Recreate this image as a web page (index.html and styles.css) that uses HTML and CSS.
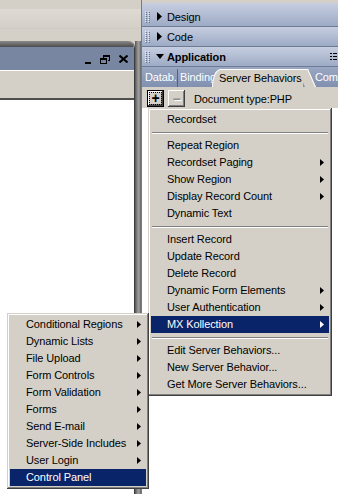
FILE: index.html
```html
<!DOCTYPE html>
<html lang="en">
<head>
    <meta charset="UTF-8">
    <title>Server Behaviors menu</title>
    <link rel="stylesheet" href="styles.css">
</head>
<body>
    <div class="screen">
        <div class="left">
            <div class="left-top"></div>
            <div class="left-main">
                <div class="docwin">
                    <div class="frame-top"></div>
                    <div class="titlebar">
                        <svg class="wbtn" width="6" height="9" viewBox="0 0 6 9"><rect x="0" y="7" width="6" height="2" fill="#000"/></svg>
                        <svg class="wbtn" width="10" height="9" viewBox="0 0 10 9">
                            <path d="M3 0h7v6h-2v-1h1v-3h-5v1h-1z" fill="#000"/>
                            <path d="M0 3h7v6h-7zM1 5v3h5v-3z" fill="#000" fill-rule="evenodd"/>
                        </svg>
                        <svg class="wbtn" width="9" height="8" viewBox="0 0 9 8"><path d="M0.5 0.5l8 7M8.5 0.5l-8 7" stroke="#000" stroke-width="2"/></svg>
                    </div>
                    <div class="doc-toolbar"></div>
                    <div class="doc-page"></div>
                </div>
                <div class="splitter"></div>
            </div>
        </div>

        <div class="panel">
            <div class="bar first">
                <svg class="grip" width="5" height="12" viewBox="0 0 5 12"><path d="M0 0h1v1h-1zM3 0h1v1h-1zM0 2h1v1h-1zM3 2h1v1h-1zM0 4h1v1h-1zM3 4h1v1h-1zM0 6h1v1h-1zM3 6h1v1h-1zM0 8h1v1h-1zM3 8h1v1h-1zM0 10h1v1h-1zM3 10h1v1h-1z" fill="#e9edf5"/><path d="M1 1h1v1h-1zM4 1h1v1h-1zM1 3h1v1h-1zM4 3h1v1h-1zM1 5h1v1h-1zM4 5h1v1h-1zM1 7h1v1h-1zM4 7h1v1h-1zM1 9h1v1h-1zM4 9h1v1h-1zM1 11h1v1h-1zM4 11h1v1h-1z" fill="#6b7893"/></svg>
                <svg class="tri" width="8" height="9" viewBox="0 0 8 9"><path d="M1 0l5 4.5l-5 4.5z" fill="#000"/></svg>
                <span>Design</span>
            </div>
            <div class="bar">
                <svg class="grip" width="5" height="12" viewBox="0 0 5 12"><path d="M0 0h1v1h-1zM3 0h1v1h-1zM0 2h1v1h-1zM3 2h1v1h-1zM0 4h1v1h-1zM3 4h1v1h-1zM0 6h1v1h-1zM3 6h1v1h-1zM0 8h1v1h-1zM3 8h1v1h-1zM0 10h1v1h-1zM3 10h1v1h-1z" fill="#e9edf5"/><path d="M1 1h1v1h-1zM4 1h1v1h-1zM1 3h1v1h-1zM4 3h1v1h-1zM1 5h1v1h-1zM4 5h1v1h-1zM1 7h1v1h-1zM4 7h1v1h-1zM1 9h1v1h-1zM4 9h1v1h-1zM1 11h1v1h-1zM4 11h1v1h-1z" fill="#6b7893"/></svg>
                <svg class="tri" width="8" height="9" viewBox="0 0 8 9"><path d="M1 0l5 4.5l-5 4.5z" fill="#000"/></svg>
                <span>Code</span>
            </div>
            <div class="bar open">
                <svg class="grip" width="5" height="12" viewBox="0 0 5 12"><path d="M0 0h1v1h-1zM3 0h1v1h-1zM0 2h1v1h-1zM3 2h1v1h-1zM0 4h1v1h-1zM3 4h1v1h-1zM0 6h1v1h-1zM3 6h1v1h-1zM0 8h1v1h-1zM3 8h1v1h-1zM0 10h1v1h-1zM3 10h1v1h-1z" fill="#e9edf5"/><path d="M1 1h1v1h-1zM4 1h1v1h-1zM1 3h1v1h-1zM4 3h1v1h-1zM1 5h1v1h-1zM4 5h1v1h-1zM1 7h1v1h-1zM4 7h1v1h-1zM1 9h1v1h-1zM4 9h1v1h-1zM1 11h1v1h-1zM4 11h1v1h-1z" fill="#6b7893"/></svg>
                <svg class="tri" width="8" height="9" viewBox="0 0 8 9"><path d="M0 2h8l-4 5z" fill="#000"/></svg>
                <span class="bar-title">Application</span>
                <svg class="opts" width="7" height="9" viewBox="0 0 7 9"><path d="M0 1h2v1h-2zM0 4h2v1h-2zM0 7h2v1h-2zM3 1h4v1h-4zM3 4h4v1h-4zM3 7h4v1h-4z" fill="#000"/></svg>
            </div>

            <div class="tabs">
                <span class="tab t-data">Datab.</span>
                <span class="tab t-bind">Binding</span>
                <span class="tab active">Server Behaviors</span>
                <span class="tab t-comp">Comp</span>
            </div>

            <div class="sb-toolbar">
                <span class="btn btn-add"><span class="focus">+</span></span>
                <span class="btn btn-del">&minus;</span>
                <span class="doctype">Document type:PHP</span>
            </div>
            <div class="sb-body"></div>
        </div>
    </div>

    <!-- popup menus drawn over the panel -->
    <div class="menu main-menu">
        <div class="item">Recordset</div>
        <div class="sep"></div>
        <div class="item">Repeat Region</div>
        <div class="item">Recordset Paging<svg class="arrow" width="4" height="7" viewBox="0 0 4 7"><path d="M0 0l4 3.5l-4 3.5z"/></svg></div>
        <div class="item">Show Region<svg class="arrow" width="4" height="7" viewBox="0 0 4 7"><path d="M0 0l4 3.5l-4 3.5z"/></svg></div>
        <div class="item">Display Record Count<svg class="arrow" width="4" height="7" viewBox="0 0 4 7"><path d="M0 0l4 3.5l-4 3.5z"/></svg></div>
        <div class="item">Dynamic Text</div>
        <div class="sep"></div>
        <div class="item">Insert Record</div>
        <div class="item">Update Record</div>
        <div class="item">Delete Record</div>
        <div class="item">Dynamic Form Elements<svg class="arrow" width="4" height="7" viewBox="0 0 4 7"><path d="M0 0l4 3.5l-4 3.5z"/></svg></div>
        <div class="item">User Authentication<svg class="arrow" width="4" height="7" viewBox="0 0 4 7"><path d="M0 0l4 3.5l-4 3.5z"/></svg></div>
        <div class="item selected">MX Kollection<svg class="arrow" width="4" height="7" viewBox="0 0 4 7"><path d="M0 0l4 3.5l-4 3.5z"/></svg></div>
        <div class="sep"></div>
        <div class="item">Edit Server Behaviors...</div>
        <div class="item">New Server Behavior...</div>
        <div class="item">Get More Server Behaviors...</div>
    </div>

    <div class="menu sub-menu">
        <div class="item">Conditional Regions<svg class="arrow" width="4" height="7" viewBox="0 0 4 7"><path d="M0 0l4 3.5l-4 3.5z"/></svg></div>
        <div class="item">Dynamic Lists<svg class="arrow" width="4" height="7" viewBox="0 0 4 7"><path d="M0 0l4 3.5l-4 3.5z"/></svg></div>
        <div class="item">File Upload<svg class="arrow" width="4" height="7" viewBox="0 0 4 7"><path d="M0 0l4 3.5l-4 3.5z"/></svg></div>
        <div class="item">Form Controls<svg class="arrow" width="4" height="7" viewBox="0 0 4 7"><path d="M0 0l4 3.5l-4 3.5z"/></svg></div>
        <div class="item">Form Validation<svg class="arrow" width="4" height="7" viewBox="0 0 4 7"><path d="M0 0l4 3.5l-4 3.5z"/></svg></div>
        <div class="item">Forms<svg class="arrow" width="4" height="7" viewBox="0 0 4 7"><path d="M0 0l4 3.5l-4 3.5z"/></svg></div>
        <div class="item">Send E-mail<svg class="arrow" width="4" height="7" viewBox="0 0 4 7"><path d="M0 0l4 3.5l-4 3.5z"/></svg></div>
        <div class="item">Server-Side Includes<svg class="arrow" width="4" height="7" viewBox="0 0 4 7"><path d="M0 0l4 3.5l-4 3.5z"/></svg></div>
        <div class="item">User Login<svg class="arrow" width="4" height="7" viewBox="0 0 4 7"><path d="M0 0l4 3.5l-4 3.5z"/></svg></div>
        <div class="item selected">Control Panel</div>
    </div>
</body>
</html>
```

FILE: styles.css
```css
body {
    margin: 0;
    width: 338px;
    height: 494px;
    overflow: hidden;
    position: relative;
    background-color: #d4d0c8;
    font-family: "Liberation Sans", Arial, sans-serif;
    font-size: 11px;
    letter-spacing: -0.1px;
    color: #000;
}
.screen {
    display: flex;
    height: 494px;
}

/* left: document window */
.left {
    width: 141px;
    display: flex;
    flex-direction: column;
}
.left-top {
    height: 41px;
    background: linear-gradient(#d4d0c8 0, #d4d0c8 9px, #dedad3 9px, #d4d0c8 28px, #ccc8c0 28px, #d4d0c8 29px);
}
.left-main {
    flex: 1;
    display: flex;
}
.docwin {
    flex: 1;
    display: flex;
    flex-direction: column;
    background-color: #fff;
    border-right: 1px solid #3c3c3c;
    border-top-right-radius: 7px;
    overflow: hidden;
}
.frame-top {
    height: 6px;
    background: linear-gradient(#8a8a8a, #4c4c4c);
}
.titlebar {
    height: 24px;
    background-color: #7886a2;
    border-bottom: 1px solid #fff;
    display: flex;
    justify-content: flex-end;
    align-items: center;
    padding: 1px 6px 0 0;
    box-sizing: border-box;
}
.wbtn {
    display: block;
    margin-left: 9px;
}
.doc-toolbar {
    height: 27px;
    background-color: #d4d0c8;
    border-bottom: 2px solid #4e4e4e;
}
.doc-page {
    flex: 1;
    background-color: #fff;
}
.splitter {
    width: 6px;
    background: linear-gradient(to right, #555, #8c8c8c 40%, #a2a2a2 65%, #626262);
}

/* right: panel group */
.panel {
    flex: 1;
    min-width: 0;
    display: flex;
    flex-direction: column;
    padding-top: 3px;
    background-color: #d4d0c8;
    border-left: 1px solid #7a7a7a;
}
.bar {
    height: 19px;
    display: flex;
    align-items: center;
    background: linear-gradient(#c6cee0, #9eabc5);
    border-bottom: 1px solid #6d7b97;
}
.bar.first {
    padding-top: 4px;
}
.grip {
    display: block;
    margin: 0 6px 0 3px;
}
.tri {
    display: block;
    margin-right: 3px;
}
.bar-title {
    font-weight: bold;
    flex: 1;
}
.opts {
    display: block;
    margin-right: 1px;
}

.tabs {
    height: 20px;
    display: flex;
    align-items: flex-end;
    background: linear-gradient(#9aa7c2, #8190b0);
    white-space: nowrap;
    overflow: hidden;
}
.tab {
    flex-shrink: 0;
    color: #fff;
    height: 18px;
    line-height: 17px;
    box-sizing: border-box;
}
.t-data {
    width: 36px;
    padding-left: 3px;
    border-right: 1px solid #55627e;
    overflow: hidden;
}
.t-bind {
    width: 36px;
    padding-left: 2px;
    overflow: hidden;
}
.tab.active {
    position: relative;
    z-index: 1;
    margin-left: -2px;
    width: 91px;
    padding-left: 6px;
    color: #000;
    background-color: #d4d0c8;
    border-top: 1px solid #fff;
    border-left: 1px solid #fff;
    border-top-left-radius: 9px 17px;
}
.tab.active::after {
    content: "";
    position: absolute;
    top: -1px;
    right: -5px;
    width: 10px;
    height: 18px;
    background-color: #d4d0c8;
    border-top: 1px solid #fff;
    border-right: 1px solid #fff;
    transform: skewX(24deg);
    transform-origin: top left;
}
.t-comp {
    padding-left: 12px;
}

.sb-toolbar {
    height: 21px;
    display: flex;
    align-items: flex-start;
    padding: 3px 0 0 5px;
    box-sizing: border-box;
    background-color: #d4d0c8;
}
.btn {
    width: 17px;
    height: 17px;
    box-sizing: border-box;
    display: flex;
    align-items: center;
    justify-content: center;
    background-color: #d4d0c8;
    box-shadow: inset -1px -1px #404040, inset 1px 1px #fff, inset -2px -2px #808080;
    font-weight: bold;
    font-size: 14px;
}
.btn-add {
    border: 1px solid #000;
}
.btn-add .focus {
    width: 11px;
    height: 11px;
    display: flex;
    align-items: center;
    justify-content: center;
    border: 1px dotted #000;
    line-height: 11px;
}
.btn-del {
    margin-left: 4px;
    color: #8c8c8c;
    text-shadow: 1px 1px #fff;
}
.doctype {
    margin-left: 9px;
    line-height: 19px;
}
.sb-body {
    flex: 1;
    background-color: #fff;
}

/* popup menus */
.menu {
    position: absolute;
    background-color: #d4d0c8;
    padding: 3px;
    box-sizing: border-box;
    box-shadow: inset -1px -1px #404040, inset 1px 1px #d4d0c8, inset -2px -2px #808080, inset 2px 2px #fff;
    z-index: 5;
}
.main-menu {
    left: 148px;
    top: 108px;
    width: 184px;
}
.sub-menu {
    left: 7px;
    top: 313px;
    width: 142px;
    z-index: 6;
}
.item {
    height: 17px;
    display: flex;
    align-items: center;
    justify-content: space-between;
    padding: 0 5px 1px 16px;
    box-sizing: border-box;
    white-space: nowrap;
}
.item.selected {
    background-color: #0a246a;
    color: #fff;
}
.arrow {
    display: block;
    fill: currentColor;
    margin-top: 1px;
}
.sep {
    height: 9px;
    margin: 0 1px;
    background: linear-gradient(#d4d0c8 4px, #808080 4px, #808080 5px, #fff 5px, #fff 6px, #d4d0c8 6px);
}
```
